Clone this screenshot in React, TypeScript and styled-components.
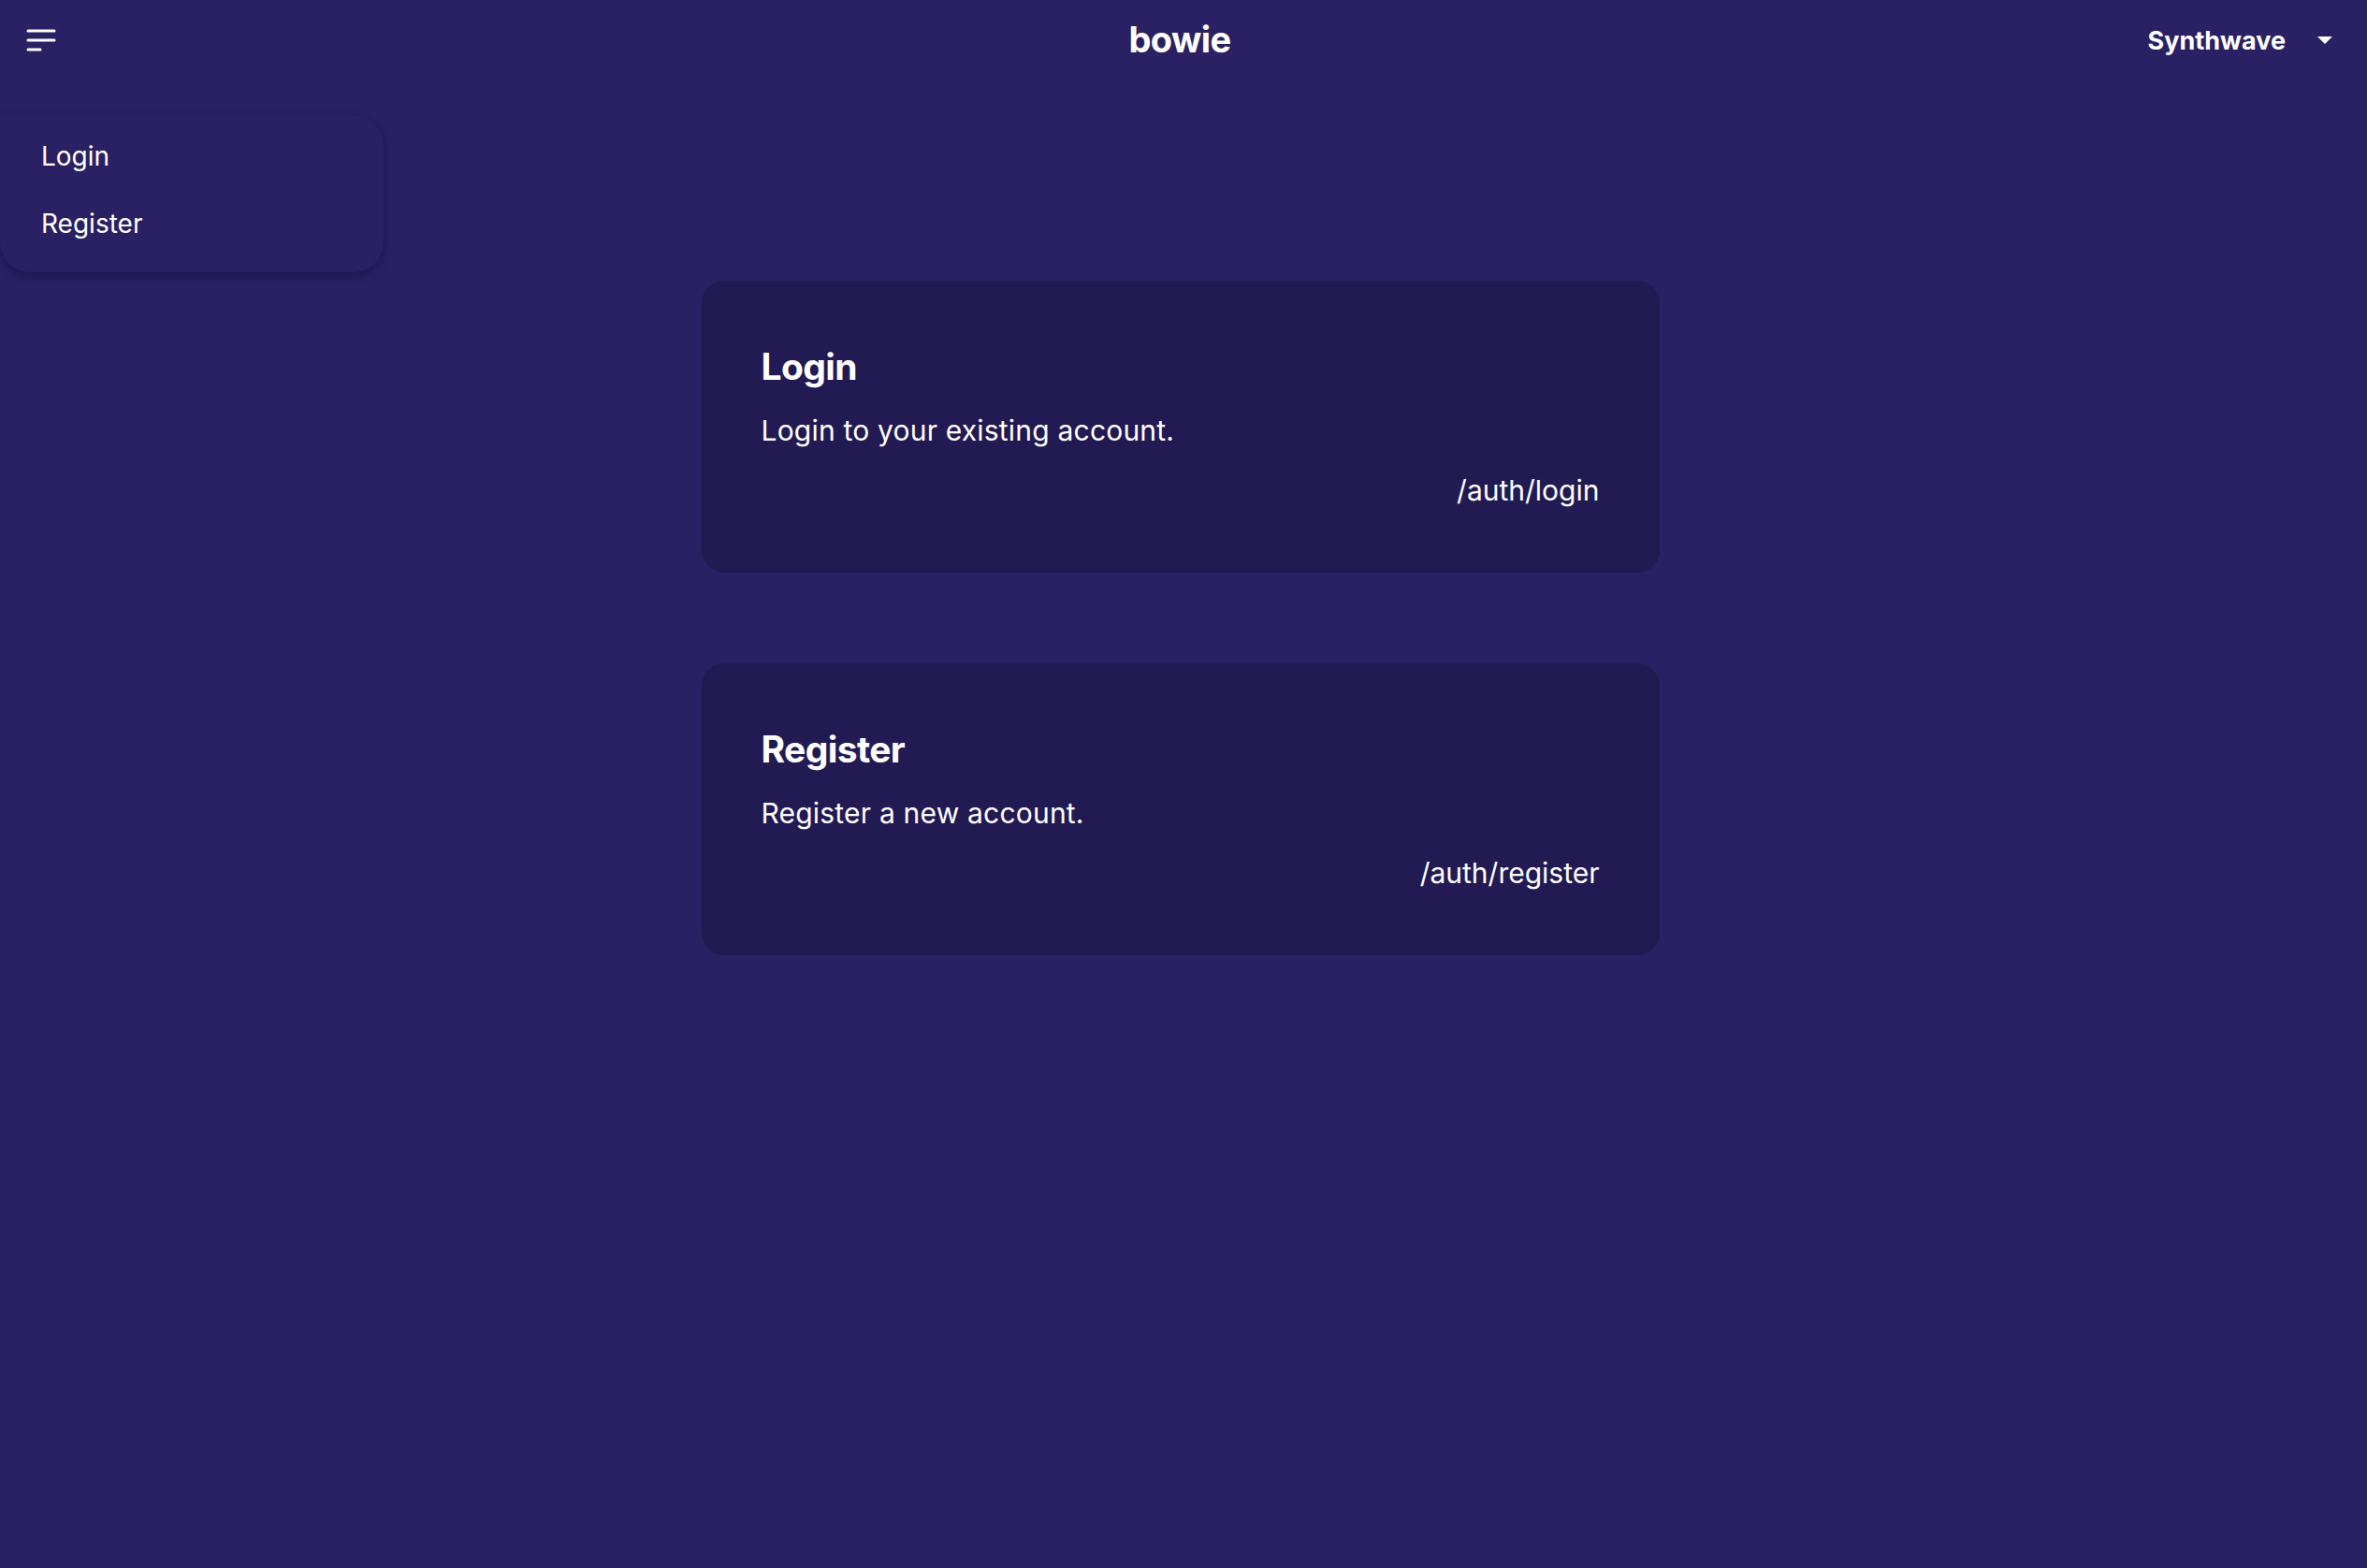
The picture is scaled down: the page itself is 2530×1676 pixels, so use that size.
import React from "react";
import styled, { createGlobalStyle } from "styled-components";

const Global = createGlobalStyle`
  html, body {
    margin: 0;
    padding: 0;
    background: #2a2064;
    min-height: 100%;
  }
  body {
    font-family: Inter, "Noto Sans", "Liberation Sans", sans-serif;
    color: #ffffff;
    -webkit-font-smoothing: antialiased;
  }
  * { box-sizing: border-box; }
`;

const Page = styled.div`
  position: relative;
  min-height: 1676px;
  background: #2a2064;
`;

const NavBar = styled.header`
  height: 86px;
  display: grid;
  grid-template-columns: 1fr auto 1fr;
  align-items: center;
  padding: 0 37px 0 22px;
`;

const MenuButton = styled.button`
  justify-self: start;
  width: 40px;
  height: 40px;
  padding: 0;
  border: 0;
  background: transparent;
  display: flex;
  align-items: center;
  justify-content: center;
  cursor: pointer;
`;

const Brand = styled.div`
  font-size: 38px;
  font-weight: 700;
  letter-spacing: -0.6px;
  line-height: 1;
  padding-bottom: 2px;
  margin-left: 7px;
`;

const ThemeSwitch = styled.div`
  justify-self: end;
  display: flex;
  align-items: center;
  gap: 34px;
  font-size: 27px;
  font-weight: 700;
`;

const DropMenu = styled.nav`
  position: absolute;
  top: 123px;
  left: 0;
  width: 410px;
  padding: 8px 12px 16px;
  background: #2a2064;
  border-radius: 0 32px 32px 32px;
  box-shadow: 0 4px 10px rgba(10, 5, 40, 0.35);
  display: flex;
  flex-direction: column;
`;

const MenuItem = styled.a`
  display: block;
  padding: 14px 32px;
  font-size: 28px;
  line-height: 44px;
  color: #ffffff;
  text-decoration: none;
`;

const Main = styled.main`
  display: flex;
  flex-direction: column;
  align-items: center;
  gap: 97px;
  padding: 214px 7px 0 0;
`;

const Card = styled.section`
  width: 1024px;
  background: #221a53;
  border-radius: 24px;
  padding: 64px;
  display: flex;
  flex-direction: column;
  gap: 16px;
`;

const CardTitle = styled.h2`
  margin: 0;
  font-size: 39px;
  line-height: 56px;
  font-weight: 700;
  letter-spacing: -0.6px;
`;

const CardText = styled.p`
  margin: 0;
  font-size: 30px;
  line-height: 48px;
  letter-spacing: 0.2px;
`;

const CardRoute = styled.div`
  font-size: 30px;
  line-height: 48px;
  text-align: right;
`;

const HamburgerIcon = () => (
  <svg width="36" height="30" viewBox="0 0 36 30">
    <g stroke="#fff" strokeWidth="3" strokeLinecap="round">
      <line x1="6" y1="5" x2="34" y2="5" />
      <line x1="6" y1="15" x2="34" y2="15" />
      <line x1="6" y1="25" x2="19" y2="25" />
    </g>
  </svg>
);

const Caret = () => (
  <svg width="16" height="9" viewBox="0 0 16 9">
    <path d="M0 0 L16 0 L8 8 Z" fill="#fff" />
  </svg>
);

const routes = [
  { title: "Login", text: "Login to your existing account.", path: "/auth/login" },
  { title: "Register", text: "Register a new account.", path: "/auth/register" },
];

export default function App() {
  return (
    <Page>
      <Global />
      <NavBar>
        <MenuButton aria-label="menu">
          <HamburgerIcon />
        </MenuButton>
        <Brand>bowie</Brand>
        <ThemeSwitch>
          <span>Synthwave</span>
          <Caret />
        </ThemeSwitch>
      </NavBar>
      <DropMenu>
        <MenuItem href="#">Login</MenuItem>
        <MenuItem href="#">Register</MenuItem>
      </DropMenu>
      <Main>
        {routes.map((r) => (
          <Card key={r.path}>
            <CardTitle>{r.title}</CardTitle>
            <CardText>{r.text}</CardText>
            <CardRoute>{r.path}</CardRoute>
          </Card>
        ))}
      </Main>
    </Page>
  );
}
